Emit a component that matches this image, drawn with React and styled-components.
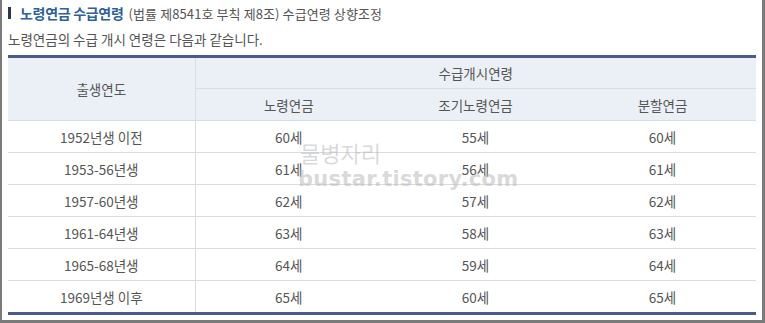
import React from 'react';
import styled, { createGlobalStyle } from 'styled-components';

const GlobalStyle = createGlobalStyle`
    html, body {
        margin: 0;
        padding: 0;
        background: #ffffff;
    }
    body {
        font-family: "Noto Sans CJK KR", "Noto Sans", sans-serif;
        color: #555;
    }
`;

const Frame = styled.div`
    position: relative;
    box-sizing: border-box;
    width: 765px;
    height: 323px;
    border-left: 2px solid #7a7a7a;
    border-right: 3px solid #7a7a7a;
    border-bottom: 3px solid #7a7a7a;
    padding: 3px 4px 0 6px;
    overflow: hidden;
`;

const Heading = styled.h3`
    display: flex;
    align-items: center;
    margin: 0;
    height: 20px;
    font-size: 13px;
    font-weight: 400;
    color: #555;
    white-space: nowrap;
    letter-spacing: 0.1px;
`;

const Marker = styled.span`
    display: inline-block;
    width: 3px;
    height: 12px;
    margin: 0 9px 0 0;
    background: #263766;
`;

const HeadingTitle = styled.strong`
    font-size: 14px;
    font-weight: 700;
    color: #2e5f9e;
    margin-right: 5px;
    letter-spacing: -0.3px;
`;

const Lead = styled.p`
    margin: 6px 0 0;
    height: 20px;
    font-size: 13.5px;
    line-height: 20px;
    letter-spacing: 0;
    color: #555;
`;

const Table = styled.table`
    width: 748px;
    margin-top: 6px;
    border-collapse: collapse;
    table-layout: fixed;
    border-top: 3px solid #4a5a8c;
    border-bottom: 3px solid #4a5a8c;
    font-size: 13.5px;
    letter-spacing: 0;
`;

const HeadCell = styled.th`
    height: ${props => props.$h || 30}px;
    padding: 0;
    background: #ebf0f6;
    font-weight: 400;
    color: #555;
    text-align: center;
    border-bottom: 1px solid #d5dde5;
    border-left: ${props => (props.$divided ? '1px solid #d5dde5' : 'none')};
`;

const Cell = styled.td`
    height: 31px;
    padding: 0;
    text-align: center;
    color: #555;
    border-bottom: ${props => (props.$last ? 'none' : '1px solid #d9dde2')};
    border-right: ${props => (props.$first ? '1px solid #d5dde5' : 'none')};
`;

const Watermark = styled.div`
    position: absolute;
    left: 296px;
    top: 141px;
    color: rgba(180, 180, 180, 0.5);
    pointer-events: none;
    line-height: 1;
`;

const WatermarkName = styled.div`
    font-size: 22px;
    font-weight: 400;
    padding-left: 2px;
`;

const WatermarkUrl = styled.div`
    margin-top: 6px;
    font-family: "DejaVu Sans", sans-serif;
    font-size: 21px;
    font-weight: 700;
    letter-spacing: 0.3px;
`;

const rows = [
    ['1952년생 이전', '60세', '55세', '60세'],
    ['1953-56년생', '61세', '56세', '61세'],
    ['1957-60년생', '62세', '57세', '62세'],
    ['1961-64년생', '63세', '58세', '63세'],
    ['1965-68년생', '64세', '59세', '64세'],
    ['1969년생 이후', '65세', '60세', '65세']
];

const App = () => {
    return (
        <Frame>
            <GlobalStyle />
            <Heading>
                <Marker />
                <HeadingTitle>노령연금 수급연령</HeadingTitle>
                (법률 제8541호 부칙 제8조) 수급연령 상향조정
            </Heading>
            <Lead>노령연금의 수급 개시 연령은 다음과 같습니다.</Lead>
            <Table>
                <thead>
                    <tr>
                        <HeadCell rowSpan={2}>출생연도</HeadCell>
                        <HeadCell $divided colSpan={3}>수급개시연령</HeadCell>
                    </tr>
                    <tr>
                        <HeadCell $divided $h={31}>노령연금</HeadCell>
                        <HeadCell $h={31}>조기노령연금</HeadCell>
                        <HeadCell $h={31}>분할연금</HeadCell>
                    </tr>
                </thead>
                <tbody>
                    {rows.map((row, i) => (
                        <tr key={`row-${i}`}>
                            {row.map((value, j) => (
                                <Cell key={`cell-${i}-${j}`} $first={j === 0} $last={i === rows.length - 1}>
                                    {value}
                                </Cell>
                            ))}
                        </tr>
                    ))}
                </tbody>
            </Table>
            <Watermark>
                <WatermarkName>물병자리</WatermarkName>
                <WatermarkUrl>bustar.tistory.com</WatermarkUrl>
            </Watermark>
        </Frame>
    );
};

export default App;
